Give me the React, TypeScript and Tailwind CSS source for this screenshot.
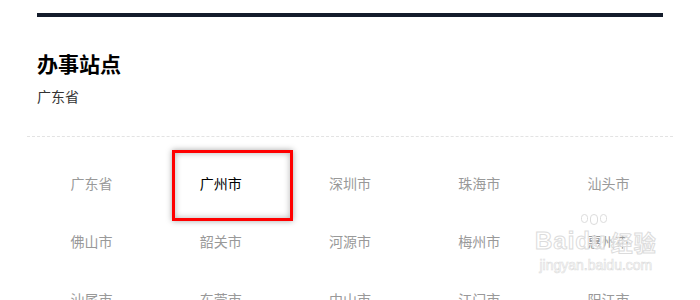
const cities = [
  "广东省", "广州市", "深圳市", "珠海市", "汕头市",
  "佛山市", "韶关市", "河源市", "梅州市", "惠州市",
  "汕尾市", "东莞市", "中山市", "江门市", "阳江市",
];

export default function App() {
  return (
    <div className="relative h-[300px] w-[700px] overflow-hidden bg-white font-['Noto_Sans_CJK_SC',sans-serif]">
      <div className="px-[27px] pt-[13px]">
        <div className="mx-[10px] h-[4px] bg-[#141c2b]" />
        <div className="px-[10px] pb-[29px] pt-[30px]">
          <h1 className="text-[21px] font-bold leading-[32px] text-black">办事站点</h1>
          <p className="mt-[6px] text-[14px] leading-[22px] text-[#333]">广东省</p>
        </div>
        <div className="border-t border-dashed border-[#e3e3e3]" />
        <ul className="grid grid-cols-5 pt-[17px]">
          {cities.map((c, i) => (
            <li
              key={c}
              className={`flex h-[58px] items-center justify-center text-[14px] ${i === 1 ? "text-black" : "text-[#999]"}`}
            >
              {c}
            </li>
          ))}
        </ul>
      </div>

      {/* annotation box */}
      <div className="pointer-events-none absolute left-[172px] top-[150px] h-[71px] w-[121px] border-[3px] border-[#ff0000] shadow-[0_0_6px_rgba(0,0,0,0.35),inset_0_0_6px_rgba(0,0,0,0.3)]" />

      {/* watermark */}
      <div className="pointer-events-none absolute left-[535px] top-[228px] flex flex-col items-center font-['Liberation_Sans',sans-serif] text-white/70 [-webkit-text-stroke:1px_#dcdcdc]">
        <div className="flex items-end text-[24px] font-bold leading-[26px] tracking-[1px]">
          <span>Bai</span>
          <span className="relative">
            <span className="absolute -top-[14px] left-[6px] flex gap-[2px]">
              <span className="h-[9px] w-[7px] rounded-full border border-[#dcdcdc]" />
              <span className="h-[11px] w-[8px] rounded-full border border-[#dcdcdc]" />
              <span className="h-[9px] w-[7px] rounded-full border border-[#dcdcdc]" />
            </span>
            du
          </span>
          <span className="ml-[4px] font-['Noto_Sans_CJK_SC',sans-serif] text-[22px]">经验</span>
        </div>
        <div className="mt-[3px] text-[14px] leading-[16px] [-webkit-text-stroke:0.6px_#dcdcdc]">jingyan.baidu.com</div>
      </div>
    </div>
  );
}
